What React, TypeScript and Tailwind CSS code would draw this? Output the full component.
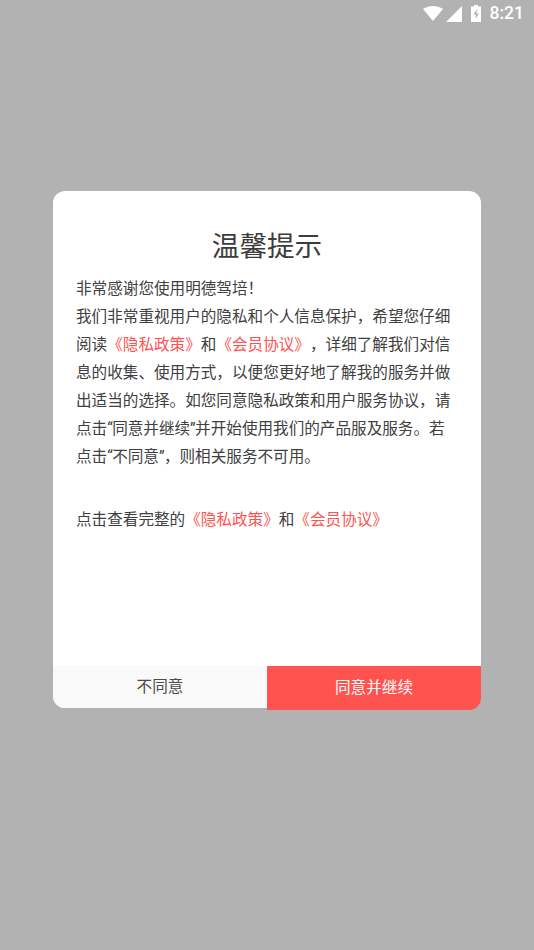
const FONT = "font-['Noto_Sans_CJK_SC','Noto_Sans',sans-serif]";

function StatusBar() {
  return (
    <div className="flex h-[27px] items-center justify-end pr-[10px] text-white">
      <svg width="20" height="15" viewBox="0 0 20 15" className="mr-[3px]">
        <path d="M0 3C3 1 6.300 0 10 0s7 1 10 3L10 15z" fill="#fff" />
      </svg>
      <svg width="16" height="16" viewBox="0 0 16 16" className="mr-[9px]">
        <path d="M16 0v16H0z" fill="#fff" />
      </svg>
      <svg width="10" height="17" viewBox="0 0 10 17" className="mr-[9px]">
        <path
          fillRule="evenodd"
          d="M3 0h4v1.500h3V17H0V1.500h3zM6 4 2.500 9.500h2.300V14l3-5.500H5.500z"
          fill="#fff"
        />
      </svg>
      <span className="font-['Roboto',sans-serif] text-[17.500px] font-medium leading-none">8:21</span>
    </div>
  );
}

function Link({ children }: { children: string }) {
  return <span className="text-[#ff5350]">{children}</span>;
}

// the quote marks are narrow Latin glyphs in the picture, not full-width CJK ones
function Q({ children }: { children: string }) {
  return <span className="font-['Roboto',sans-serif] leading-none tracking-[-0.6px]">{children}</span>;
}

export default function App() {
  return (
    <div className={`${FONT} h-[950px] w-[534px] overflow-hidden bg-[#b2b2b2] [text-spacing-trim:space-all]`}>
      <StatusBar />
      <div className="ml-[53px] mt-[164px] flex h-[517px] w-[428px] flex-col rounded-[12px] bg-white">
        <h1 className="mt-[33px] text-center text-[27.600px] font-normal leading-[40px] text-[#3c3c3c]">
          温馨提示
        </h1>
        <div className="mx-[23px] mt-[9px] whitespace-nowrap text-[15.600px] leading-[28px] text-[#404040]">
          <p>非常感谢您使用明德驾培！</p>
          <p>我们非常重视用户的隐私和个人信息保护，希望您仔细</p>
          <p>
            阅读<Link>《隐私政策》</Link>和<Link>《会员协议》</Link>，详细了解我们对信
          </p>
          <p>息的收集、使用方式，以便您更好地了解我的服务并做</p>
          <p>出适当的选择。如您同意隐私政策和用户服务协议，请</p>
          <p className="h-[28px]">
            点击<Q>“</Q>同意并继续<Q>”</Q>并开始使用我们的产品服及服务。若
          </p>
          <p className="h-[28px]">
            点击<Q>“</Q>不同意<Q>”</Q>，则相关服务不可用。
          </p>
          <p className="mt-[35px]">
            点击查看完整的<Link>《隐私政策》</Link>和<Link>《会员协议》</Link>
          </p>
        </div>
        <div className="mt-auto flex h-[42px] items-start">
          <button className="h-[42px] w-[214px] rounded-bl-[12px] bg-[#f9f9f9] pb-[2px] text-[15.600px] text-[#4a4a4a]">
            不同意
          </button>
          <button className="h-[44px] w-[214px] rounded-br-[12px] bg-[#ff5350] pb-[2px] text-[15.600px] text-white">
            同意并继续
          </button>
        </div>
      </div>
    </div>
  );
}
